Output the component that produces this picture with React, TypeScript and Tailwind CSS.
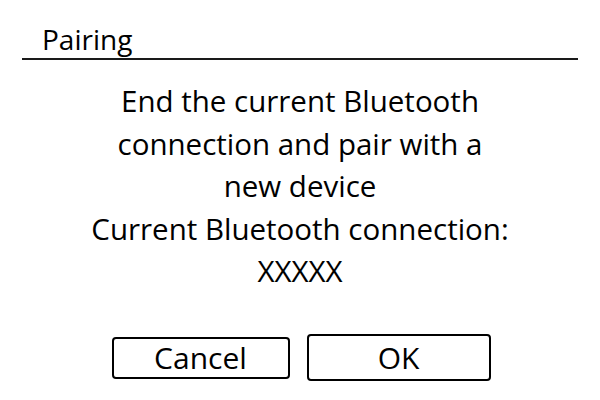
const font = { fontFamily: '"Open Sans", "Noto Sans", sans-serif' };

function DialogButton({ label, className }: { label: string; className: string }) {
    return (
        <button className={`flex items-center justify-center border-2 border-black rounded-[4px] bg-white text-black text-[30px] leading-none ${className}`}>
            {label}
        </button>
    );
}

export default function App() {
    return (
        <div className="w-[600px] h-[400px] bg-white text-black overflow-hidden flex flex-col" style={font}>
            <div className="pl-[42px] pt-[23px] h-[58px] text-[28px] leading-[32px]">Pairing</div>
            <div className="mx-[22px] h-[2px] bg-[#1a1a1a]" />
            <div className="mt-[20px] flex flex-col items-center text-center text-[29.5px] leading-[42.5px]">
                <p>End the current Bluetooth</p>
                <p>connection and pair with a</p>
                <p>new device</p>
                <p>Current Bluetooth connection:</p>
                <p>XXXXX</p>
            </div>
            <div className="mt-auto mb-[19px] flex items-center justify-center gap-[17px] pl-[2px]">
                <DialogButton label="Cancel" className="w-[178px] h-[42px]" />
                <DialogButton label="OK" className="w-[184px] h-[47px]" />
            </div>
        </div>
    );
}
